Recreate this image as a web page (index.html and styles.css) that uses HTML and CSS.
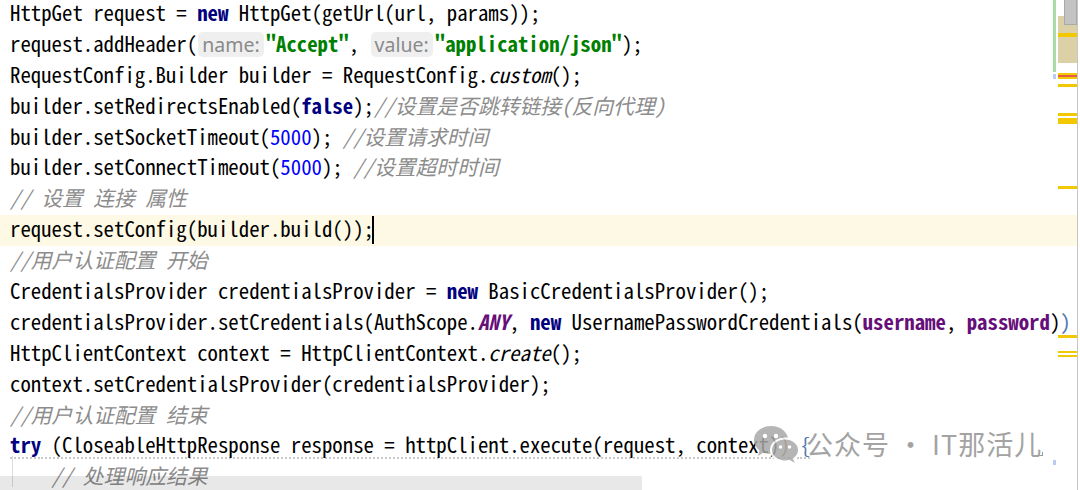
FILE: index.html
```html
<!DOCTYPE html>
<html lang="zh-CN">
<head>
<meta charset="utf-8">
<title>HttpClient code</title>
<link rel="stylesheet" href="styles.css">
</head>
<body>
<div class="editor">
  <div class="code">
    <div class="line">HttpGet request = <span class="kw">new</span> HttpGet(getUrl(url, params));</div>
    <div class="line">request.addHeader(<span class="hint">name:</span><span class="str">"Accept"</span>, <span class="hint">value:</span><span class="str">"application/json"</span>);</div>
    <div class="line">RequestConfig.Builder builder = RequestConfig.<span class="it">custom</span>();</div>
    <div class="line">builder.setRedirectsEnabled(<span class="kw">false</span>);<span class="cm">//设置是否跳转链接(反向代理)</span></div>
    <div class="line">builder.setSocketTimeout(<span class="num">5000</span>); <span class="cm">//设置请求时间</span></div>
    <div class="line">builder.setConnectTimeout(<span class="num">5000</span>); <span class="cm">//设置超时时间</span></div>
    <div class="line"><span class="cm">// 设置 连接 属性</span></div>
    <div class="line current">request.setConfig(builder.build());<span class="caret"></span></div>
    <div class="line"><span class="cm">//用户认证配置 开始</span></div>
    <div class="line">CredentialsProvider credentialsProvider = <span class="kw">new</span> BasicCredentialsProvider();</div>
    <div class="line">credentialsProvider.setCredentials(AuthScope.<span class="static">ANY</span>, <span class="kw">new</span> UsernamePasswordCredentials(<span class="field">username</span>, <span class="field">password</span>)<span class="br2">)</span></div>
    <div class="line">HttpClientContext context = HttpClientContext.<span class="it">create</span>();</div>
    <div class="line">context.setCredentialsProvider(credentialsProvider);</div>
    <div class="line"><span class="cm">//用户认证配置 结束</span></div>
    <div class="line"><span class="weak"><span class="kw">try</span> (CloseableHttpResponse response = httpClient.execute(request, context)<span class="br1">)</span> <span class="br2">{</span></span></div>
    <div class="line"><span class="guide"></span><span class="cm">// 处理响应结果</span></div>
  </div>

  <div class="stripe">
    <div class="mark change" style="top:0;height:72px"></div>
    <div class="mark blue" style="top:74px;height:5px"></div>
    <div class="mark blue" style="top:460px;height:5px"></div>
    <div class="mark tan" style="top:16px;height:47px"></div>
    <div class="mark thumb" style="top:0;height:25px"></div>
    <div class="mark warn" style="top:33px;height:4px"></div>
    <div class="mark warn" style="top:73px;height:6px"></div>
    <div class="mark err" style="top:75px;height:2px"></div>
    <div class="mark warn" style="top:84px;height:3px"></div>
    <div class="mark warn" style="top:113px;height:3px"></div>
    <div class="mark warn" style="top:118px;height:6px"></div>
    <div class="mark warn" style="top:186px;height:3px"></div>
    <div class="mark warn" style="top:335px;height:3px"></div>
    <div class="mark warn" style="top:351px;height:2px"></div>
    <div class="mark warn" style="top:355px;height:2px"></div>
    <div class="corner"></div>
  </div>

  <div class="hscroll"></div>

  <div class="watermark">
    <svg class="wx" viewBox="0 0 48 40" width="48" height="40" aria-hidden="true">
      <ellipse cx="19" cy="16" rx="17" ry="14" fill="#a9a9a9"/>
      <path d="M8 25 L6 32 L14 27 Z" fill="#a9a9a9"/>
      <circle cx="13" cy="12" r="2.2" fill="#fff"/>
      <circle cx="24" cy="12" r="2.2" fill="#fff"/>
      <ellipse cx="33" cy="26" rx="14" ry="11.5" fill="#a9a9a9" stroke="#fff" stroke-width="2"/>
      <path d="M40 33 L43 39 L36 35 Z" fill="#a9a9a9"/>
      <circle cx="28.5" cy="23" r="1.8" fill="#fff"/>
      <circle cx="37.5" cy="23" r="1.8" fill="#fff"/>
    </svg>
    <span class="wm-text">公众号 · IT那活儿</span>
  </div>
</div>
</body>
</html>
```

FILE: styles.css
```css
* { box-sizing: border-box; }

html, body {
  margin: 0;
  padding: 0;
  background: #ffffff;
}

body {
  width: 1080px;
  height: 490px;
  overflow: hidden;
}

.editor {
  position: relative;
  width: 1078px;
  height: 490px;
  overflow: hidden;
  border-right: 1px solid #c6c6c6;
}

.code {
  margin-top: -1px;
  font-family: "Noto Sans Mono CJK SC", "Liberation Mono", monospace;
  font-size: 20.8px;
  color: #000000;
}

.line {
  height: 30.9px;
  line-height: 26px;
  padding-left: 10px;
  white-space: pre;
}

.line.current {
  background: #fef9e4;
}

.kw { color: #000080; font-weight: bold; }
.str { color: #008000; font-weight: bold; }
.num { color: #0000ff; }
.cm { color: #8c8c8c; font-style: italic; }
.it { font-style: italic; }
.static { color: #660e7a; font-style: italic; font-weight: bold; }
.field { color: #660e7a; font-weight: bold; }
.br1 { color: #a0622a; }
.br2 { color: #4f78b0; }

.hint {
  display: inline-block;
  margin: 0 2px 0 1px;
  padding: 0 4px;
  border-radius: 5px;
  background: #efefef;
  color: #8a8a8a;
  font-family: "Noto Sans", "Liberation Sans", sans-serif;
  font-size: 19.5px;
  line-height: 25px;
  font-style: normal;
  font-weight: normal;
}

.caret {
  display: inline-block;
  width: 2px;
  height: 28px;
  margin-left: -2px;
  background: #000000;
  vertical-align: -7px;
}

.weak {
  text-decoration: underline dotted #c9c9c9;
  text-underline-offset: 4px;
}

.guide {
  display: inline-block;
  width: 41.6px;
  height: 30.9px;
  vertical-align: top;
  margin-top: -6px;
  border-left: 1px solid #dcdcdc;
  margin-left: 2px;
  margin-right: -2px;
}

/* right-hand error stripe, drawn over the editor */
.stripe {
  position: absolute;
  top: 0;
  right: 0;
  width: 24px;
  height: 100%;
}

.mark {
  position: absolute;
  left: 5px;
  right: 0;
}

.mark.change {
  left: 0;
  right: auto;
  width: 3px;
  background: #a9dca9;
}

.mark.blue {
  left: 0;
  right: auto;
  width: 3px;
  background: #b9cdf3;
}

.mark.tan {
  background: rgba(205, 188, 130, 0.7);
}

.mark.thumb {
  left: 11px;
  background: #c3c3c3;
  border: 1px solid #a9a9a9;
  border-top: 0;
}

.mark.warn {
  background: #f2c800;
}

.mark.err {
  background: #e65a4a;
}

.corner {
  position: absolute;
  left: -14px;
  top: 452px;
  width: 4px;
  height: 4px;
  border-right: 1px solid #9a9a9a;
  border-bottom: 1px solid #9a9a9a;
}

.hscroll {
  position: absolute;
  left: 0;
  bottom: 0;
  width: 642px;
  height: 14px;
  background: rgba(0, 0, 0, 0.09);
}

.watermark {
  position: absolute;
  left: 752px;
  top: 424px;
  display: flex;
  align-items: center;
  gap: 6px;
}

.wx {
  display: block;
  opacity: 0.85;
}

.wm-text {
  font-family: "Noto Sans CJK SC", "Noto Sans", sans-serif;
  font-size: 27px;
  line-height: 36px;
  color: #a3a3a3;
  letter-spacing: 1px;
}
```
